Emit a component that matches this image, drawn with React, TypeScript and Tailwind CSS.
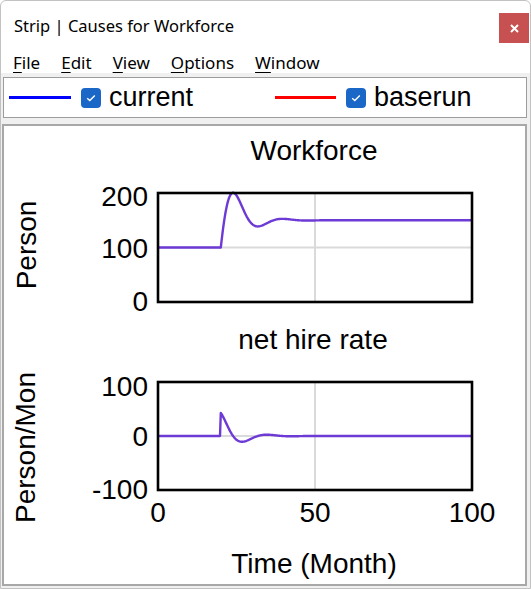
const FONT_UI = { fontFamily: '"Noto Sans", "Open Sans", sans-serif' };
const FONT_CHART = '"Liberation Sans", Arial, sans-serif';

// Simulated run: workforce steps toward 150 after month 20 with a damped overshoot.
function workforce(t: number) {
  if (t < 20) return 100;
  const s = t - 20;
  const e = Math.exp(-0.19 * s);
  return 150 - 50 * e * Math.cos(0.4 * s) + 106.5 * e * Math.sin(0.4 * s);
}

function netHireRate(t: number) {
  if (t < 20) return 0;
  const s = t - 20;
  const e = Math.exp(-0.19 * s);
  return 0.82 * e * (52.1 * Math.cos(0.4 * s) - 0.235 * Math.sin(0.4 * s));
}

const tx = (t: number) => 158 + t * 3.14;

function series(fn: (t: number) => number, y0: number, k: number) {
  const pts: string[] = [];
  for (let i = 0; i <= 400; i++) {
    const t = i * 0.25;
    pts.push(`${tx(t).toFixed(2)},${(y0 - fn(t) * k).toFixed(2)}`);
  }
  return "M" + pts.join(" L");
}

function Checkbox() {
  return (
    <div className="w-[20px] h-[20px] rounded-[4px] bg-[#1a67c7] flex items-center justify-center">
      <svg width="10" height="8" viewBox="0 0 10 8">
        <path d="M1.2 4.2 L3.8 6.6 L8.8 1.4" fill="none" stroke="#ffffff" strokeWidth="1.4" />
      </svg>
    </div>
  );
}

function LegendItem({ color, label, lineWidth }: { color: string; label: string; lineWidth: number }) {
  return (
    <div className="flex items-center">
      <div className="h-[2.5px]" style={{ width: lineWidth, background: color }} />
      <div className="ml-[10px]">
        <Checkbox />
      </div>
      <span className="ml-[8px] text-[27px] leading-none text-black" style={{ fontFamily: FONT_CHART }}>
        {label}
      </span>
    </div>
  );
}

function MenuItem({ first, rest }: { first: string; rest: string }) {
  return (
    <span>
      <span className="underline underline-offset-[3px] decoration-1">{first}</span>
      {rest}
    </span>
  );
}

function Charts() {
  const axis = { fontFamily: FONT_CHART, fontSize: 28, fill: "#000" };
  const line = "#6d3ad6";
  const grid = "#dadada";
  return (
    <svg width="521" height="458" viewBox="4 126 521 458" className="block">
      {/* Workforce */}
      <text x="314" y="160" textAnchor="middle" {...axis}>Workforce</text>
      <text transform="translate(35.5 245) rotate(-90)" textAnchor="middle" {...axis}>Person</text>
      <text x="148" y="206" textAnchor="end" {...axis}>200</text>
      <text x="148" y="258" textAnchor="end" {...axis}>100</text>
      <text x="148" y="311" textAnchor="end" {...axis}>0</text>
      <line x1="315" y1="193" x2="315" y2="302" stroke={grid} strokeWidth="2" />
      <line x1="158" y1="247.5" x2="472" y2="247.5" stroke={grid} strokeWidth="2" />
      <path d={series(workforce, 302, 0.545)} fill="none" stroke={line} strokeWidth="2.4" strokeLinejoin="round" />
      <rect x="158" y="193" width="314" height="109" fill="none" stroke="#000" strokeWidth="2.6" />

      {/* net hire rate */}
      <text x="313" y="349" textAnchor="middle" {...axis}>net hire rate</text>
      <text transform="translate(35 523) rotate(-90)" textAnchor="start" {...axis}>Person/Mon</text>
      <text x="148" y="396" textAnchor="end" {...axis}>100</text>
      <text x="148" y="446" textAnchor="end" {...axis}>0</text>
      <text x="148" y="499" textAnchor="end" {...axis}>-100</text>
      <line x1="315" y1="382" x2="315" y2="490" stroke={grid} strokeWidth="2" />
      <line x1="158" y1="436" x2="472" y2="436" stroke={grid} strokeWidth="2" />
      <path d={series(netHireRate, 436, 0.54)} fill="none" stroke={line} strokeWidth="2.4" strokeLinejoin="round" />
      <rect x="158" y="382" width="314" height="108" fill="none" stroke="#000" strokeWidth="2.6" />

      <text x="158" y="522" textAnchor="middle" {...axis}>0</text>
      <text x="315" y="522" textAnchor="middle" {...axis}>50</text>
      <text x="472" y="522" textAnchor="middle" {...axis}>100</text>
      <text x="314" y="573" textAnchor="middle" {...axis}>Time (Month)</text>
    </svg>
  );
}

export default function App() {
  return (
    <div
      className="w-[531px] h-[589px] bg-white border border-[#c2c2c2] rounded-t-[6px] flex flex-col overflow-hidden text-black"
      style={FONT_UI}
    >
      {/* title bar */}
      <div className="h-[44px] flex items-start justify-between shrink-0">
        <div className="pl-[13px] pt-[13px] text-[16.5px] leading-[24px]">Strip | Causes for Workforce</div>
        <button className="mt-[12px] mr-[1px] w-[30px] h-[30px] bg-[#c75050] flex items-center justify-center">
          <svg width="9" height="9" viewBox="0 0 9 9">
            <path d="M1 1 L8 8 M8 1 L1 8" stroke="#ffffff" strokeWidth="2" />
          </svg>
        </button>
      </div>

      {/* menu bar */}
      <div className="h-[28px] shrink-0 flex items-center gap-[21px] pl-[12px] pt-[6px] text-[17px] leading-none">
        <MenuItem first="F" rest="ile" />
        <MenuItem first="E" rest="dit" />
        <MenuItem first="V" rest="iew" />
        <MenuItem first="O" rest="ptions" />
        <MenuItem first="W" rest="indow" />
      </div>

      <div className="flex-1 bg-[#f0f0f0] pt-[4px] pl-[1px] pr-[3px] pb-[2px] flex flex-col gap-[6px]">
        <div className="h-[41px] shrink-0 bg-white border border-[#9c9c9c] ml-[1px] flex items-center pl-[5px]">
          <div className="w-[266px]">
            <LegendItem color="#0000ff" label="current" lineWidth={62} />
          </div>
          <LegendItem color="#ff0000" label="baserun" lineWidth={61} />
        </div>
        <div className="flex-1 bg-white border-2 border-[#a8a8a8] overflow-hidden">
          <Charts />
        </div>
      </div>
    </div>
  );
}
